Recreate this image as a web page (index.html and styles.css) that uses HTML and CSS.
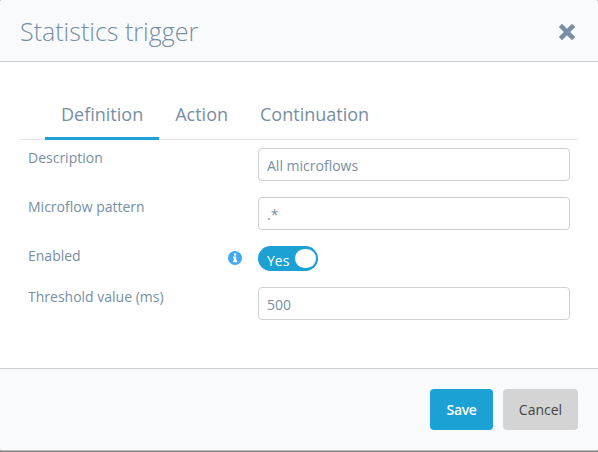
FILE: index.html
```html
<!DOCTYPE html>
<html lang="en">
<head>
<meta charset="utf-8">
<title>Statistics trigger</title>
<link rel="stylesheet" href="styles.css">
</head>
<body>
<div class="dialog">
  <header class="header">
    <h1 class="title">Statistics trigger</h1>
    <button class="close" aria-label="Close"><svg width="18" height="18" viewBox="0 0 18 18"><path d="M2.4 2.4 15.6 15.6M15.6 2.4 2.4 15.6" stroke="#778ea5" stroke-width="4.6"/></svg></button>
  </header>
  <main class="body">
    <nav class="tabs">
      <a class="tab active">Definition</a>
      <a class="tab">Action</a>
      <a class="tab">Continuation</a>
    </nav>
    <div class="form">
      <div class="row"><label class="label">Description</label><input class="input" value="All microflows"></div>
      <div class="row"><label class="label">Microflow pattern</label><input class="input" value=".*"></div>
      <div class="row row-switch">
        <label class="label">Enabled</label>
        <svg class="info" width="14" height="14" viewBox="0 0 14 14"><circle cx="7" cy="7" r="7" fill="#42aaf5"/><path d="M5.9 2.5h2.3v2H5.9zM5 5.6h3.2v4h1v1.6H5V9.600h1V7.200H5z" fill="#fff"/></svg>
        <div class="switch"><span class="switch-text">Yes</span><span class="knob"></span></div>
      </div>
      <div class="row"><label class="label">Threshold value (ms)</label><input class="input" value="500"></div>
    </div>
  </main>
  <footer class="footer">
    <button class="btn save">Save</button>
    <button class="btn cancel">Cancel</button>
  </footer>
</div>
</body>
</html>
```
FILE: styles.css
```css
* { box-sizing: border-box; }
body {
  margin: 0;
  height: 452px;
  overflow: hidden;
  background: #858585;
  font-family: "Open Sans", "Noto Sans", sans-serif;
  font-size: 14px;
  color: #778ea5;
}
button, input { font: inherit; color: inherit; }
.dialog {
  display: flex;
  flex-direction: column;
  height: 451px;
  border-bottom: 1px solid #b9bbbc;
  border-radius: 2px;
  background: #fff;
  overflow: hidden;
}
.header {
  display: flex;
  justify-content: space-between;
  align-items: center;
  height: 62px;
  padding: 0 22px 0 20px;
  background: #f9fafc;
  border-bottom: 1px solid #d0d0d0;
}
.title {
  margin: 0;
  font-size: 25px;
  font-weight: 300;
  line-height: 34px;
}
.close {
  display: flex;
  margin-top: 3px;
  padding: 0;
  border: 0;
  background: none;
}
.body { flex: 1; padding: 28px 20px 0; }
.tabs {
  display: flex;
  height: 50px;
  padding-left: 25px;
  border-bottom: 1px solid #e5e5e5;
}
.tab {
  height: 50px;
  padding: 12px 16px 0;
  font-size: 18px;
  line-height: 25px;
}
.tab.active { border-bottom: 3px solid #1ba1d3; }
.form { padding: 8px 8px 0; }
.row {
  display: flex;
  height: 33px;
  margin-bottom: 16px;
}
.label { width: 200px; line-height: 20px; }
.input {
  width: 312px;
  height: 33px;
  margin-left: 30px;
  padding: 1px 8px 0;
  border: 1px solid #cfd0d2;
  border-radius: 4px;
  background: #fff;
  outline: 0;
}
.row-switch { height: 25px; }
.info { margin: 5px 16px 0 0; }
.switch {
  display: flex;
  align-items: center;
  justify-content: space-between;
  width: 60px;
  height: 25px;
  padding: 0 2px 0 9px;
  border-radius: 13px;
  background: #1ba1d3;
  color: #fff;
}
.switch-text { padding-top: 5px; line-height: 20px; }
.knob { width: 21px; height: 19px; border-radius: 10px; background: #fff; }
.footer {
  display: flex;
  justify-content: flex-end;
  gap: 10px;
  height: 82px;
  padding: 20px 20px 0;
  background: #f9fafc;
  border-top: 1px solid #d0d0d0;
}
.btn {
  height: 41px;
  padding: 0;
  border: 0;
  border-radius: 4px;
}
.save { width: 63px; background: #1ba1d3; color: #fff; font-weight: 600; letter-spacing: -.4px; }
.cancel { width: 75px; background: #d4d4d4; color: #444; }
```
